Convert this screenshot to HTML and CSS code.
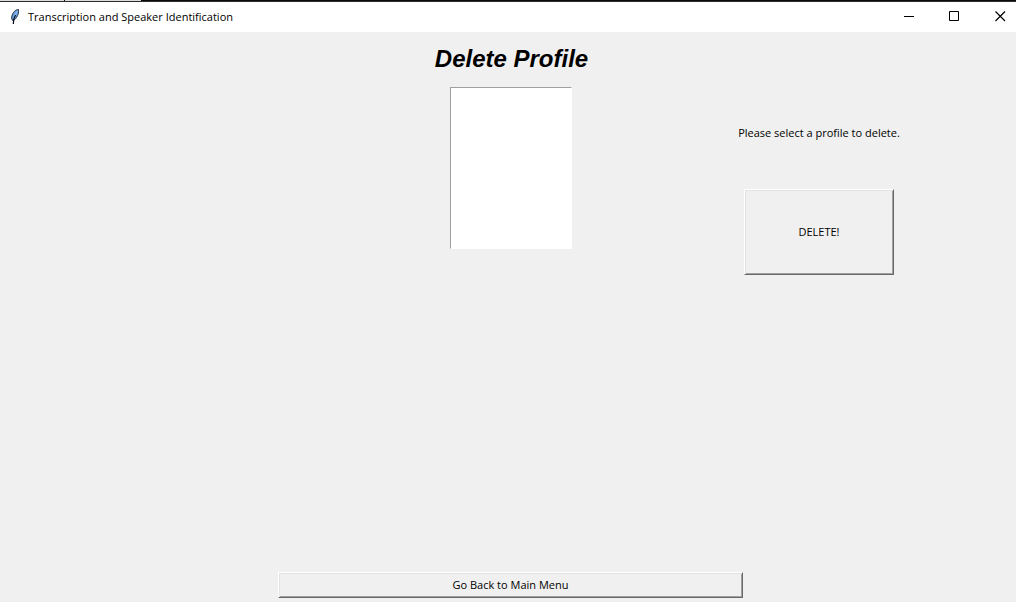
FILE: index.html
```html
<!DOCTYPE html>
<html lang="en">
<head>
<meta charset="utf-8">
<title>Transcription and Speaker Identification</title>
<link rel="stylesheet" href="styles.css">
</head>
<body>
<div class="backdrop"><span class="backdrop-tab tab-wide"></span><span class="backdrop-tab tab-next"></span></div>
<header class="titlebar">
  <svg class="feather" width="12" height="18" viewBox="0 0 12 18" aria-hidden="true">
    <path d="M3.500 12.500C2 10.500 2.600 7.500 4.300 4.800C5.800 2.500 8 1.500 9.500 1.500C9.900 4 9.200 7 7.500 9.500C6.300 11.300 5 12.500 3.500 12.500Z" fill="#6a9fe0" stroke="#26303e" stroke-width="1"/>
    <path d="M8.300 3L5.300 8.500" stroke="#8fbcf0" stroke-width="1.2" fill="none"/>
    <path d="M6.500 7C5 9.500 4.300 11.500 4.300 16" stroke="#080c14" stroke-width="1.2" fill="none"/>
  </svg>
  <span class="window-title">Transcription and Speaker Identification</span>
  <div class="window-controls">
    <button class="control" type="button" aria-label="Minimize"><svg width="11" height="11" viewBox="0 0 11 11"><path d="M0 5.5H10" stroke="#000"/></svg></button>
    <button class="control" type="button" aria-label="Maximize"><svg width="11" height="11" viewBox="0 0 11 11"><path d="M.5 .5H9.500V9.500H.5Z" stroke="#000" fill="none"/></svg></button>
    <button class="control" type="button" aria-label="Close"><svg width="11" height="11" viewBox="0 0 11 11"><path d="M.5 .5L10 10M10 .5L.5 10" stroke="#000" stroke-width="1.2" fill="none"/></svg></button>
  </div>
</header>
<main class="content">
  <h1 class="heading" id="heading">Delete Profile</h1>
  <div class="columns">
    <select class="profiles" size="10" aria-labelledby="heading"></select>
    <section class="actions">
      <p class="prompt">Please select a profile to delete.</p>
      <button class="raised delete" type="button">DELETE!</button>
    </section>
  </div>
  <button class="raised back" type="button">Go Back to Main Menu</button>
</main>
</body>
</html>
```
FILE: styles.css
```css
* {
  box-sizing: border-box;
}

body {
  margin: 0;
  min-height: 100vh;
  display: flex;
  flex-direction: column;
  background: #f0f0f0;
  color: #000;
  font: 11px/16px "Open Sans", "Noto Sans", sans-serif;
}

button {
  font: inherit;
  color: inherit;
}

.backdrop {
  display: flex;
  gap: 1px;
  height: 2px;
  background: #0c0a0b;
  border-bottom: 1px solid #302c2e;
}

.backdrop-tab {
  background: #dcdcd8;
}

.tab-wide {
  width: 64px;
}

.tab-next {
  width: 76px;
}

.titlebar {
  display: flex;
  align-items: center;
  height: 30px;
  padding-left: 9px;
  background: #fff;
}

.window-title {
  margin-left: 7px;
}

.window-controls {
  display: flex;
  align-self: stretch;
  margin-left: auto;
}

.control {
  display: flex;
  align-items: center;
  justify-content: flex-end;
  width: 46px;
  padding: 0 10px 2px 0;
  border: 0;
  background: none;
}

.control:first-child {
  padding-right: 9px;
}

.content {
  flex: 1;
  display: flex;
  flex-direction: column;
  align-items: center;
  padding: 12px 0 4px;
}

.heading {
  margin: 0 0 13px;
  padding-left: 7px;
  font: italic bold 24px/30px "Liberation Sans", Arial, sans-serif;
}

.columns {
  align-self: stretch;
  display: grid;
  grid-template-columns: 400fr 222fr 394fr;
}

.profiles {
  grid-column: 2;
  justify-self: center;
  width: 122px;
  height: 162px;
  border: 1px solid #fff;
  border-top-color: #a0a0a0;
  border-left-color: #a0a0a0;
  border-radius: 0;
  background: #fff;
  font: inherit;
}

.actions {
  grid-column: 3;
  display: flex;
  flex-direction: column;
  align-items: center;
  gap: 48px;
  padding-top: 38px;
}

.prompt {
  margin: 0;
}

.raised {
  border: 1px solid;
  border-color: #fff #696969 #696969 #fff;
  background: #f0f0f0;
  box-shadow: inset 1px 1px #e3e3e3, inset -1px -1px #a0a0a0;
}

.delete {
  width: 150px;
  height: 86px;
}

.back {
  width: 45.8%;
  height: 26px;
  margin: auto 0 0 5px;
  padding: 0;
}
```
